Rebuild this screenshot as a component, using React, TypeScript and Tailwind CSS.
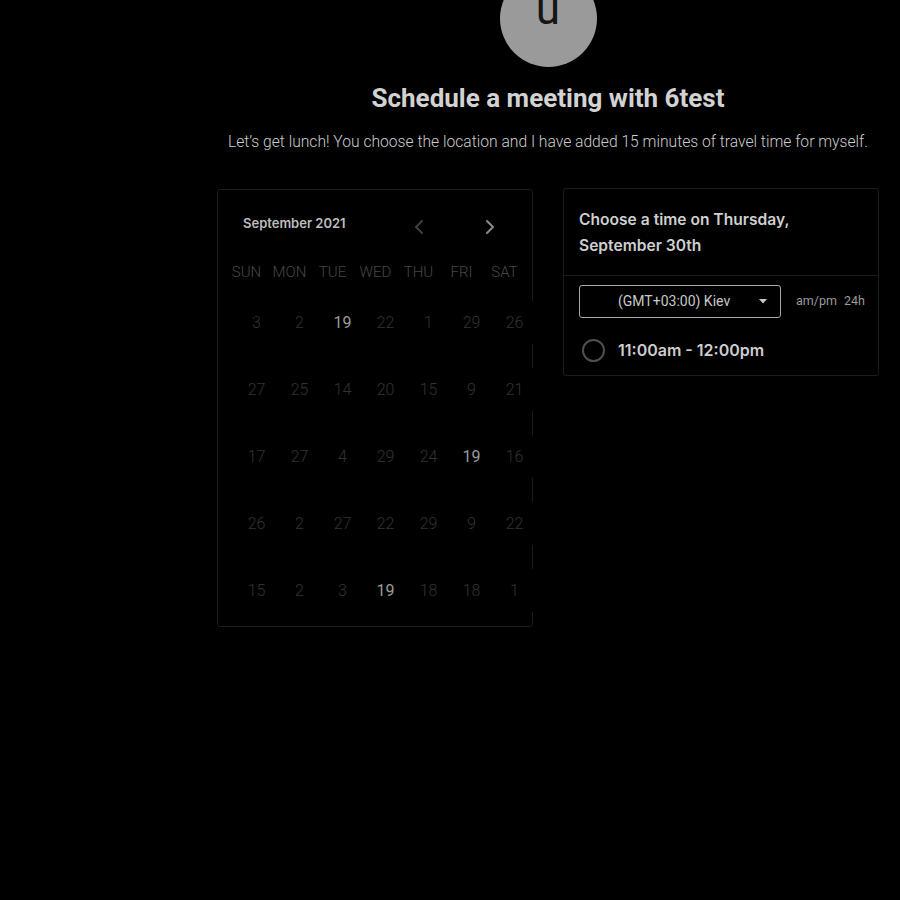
import React from "react"

const weekdays = ["SUN", "MON", "TUE", "WED", "THU", "FRI", "SAT"]

const weeks = [
  ["3", "2", "19", "22", "1", "29", "26"],
  ["27", "25", "14", "20", "15", "9", "21"],
  ["17", "27", "4", "29", "24", "19", "16"],
  ["26", "2", "27", "22", "29", "9", "22"],
  ["15", "2", "3", "19", "18", "18", "1"],
]

// which cells are available (brighter)
const active: Record<string, boolean> = { "0-2": true, "2-5": true, "4-3": true }

function Chevron({ dir, color }: { dir: "left" | "right"; color: string }) {
  return (
    <svg width="10" height="16" viewBox="0 0 10 16" fill="none">
      <path
        d={dir === "left" ? "M8 2L2 8l6 6" : "M2 2l6 6-6 6"}
        stroke={color}
        strokeWidth="2"
        strokeLinecap="round"
        strokeLinejoin="round"
      />
    </svg>
  )
}

function Calendar() {
  return (
    <div className="w-[316px] h-[438px] border border-[#1c1c1c] rounded-[3px] bg-black flex flex-col shrink-0">
      <div className="flex items-center h-[44px] mt-[12px] pl-[25px]">
        <span className="text-[13px] font-semibold text-[#bdbdbd] font-['Inter',sans-serif] w-[171px]">
          September 2021
        </span>
        <div className="flex items-center gap-[61px] mt-[6px]">
          <Chevron dir="left" color="#3f3f3f" />
          <Chevron dir="right" color="#8a8a8a" />
        </div>
      </div>
      <div className="grid grid-cols-[repeat(7,43px)] pl-[7px] mt-[13px] font-['Roboto',sans-serif] font-light text-[15px] text-[#474747]">
        {weekdays.map(d => (
          <div key={d} className="text-center h-[26px] leading-[26px]">{d}</div>
        ))}
      </div>
      <div className="grid grid-cols-[repeat(7,43px)] gap-y-[24px] pl-[17px] mt-[16px] font-['Roboto',sans-serif] font-light text-[16px]">
        {weeks.map((w, i) =>
          w.map((n, j) => (
            <div
              key={i + "-" + j}
              className={
                "h-[43px] bg-black flex items-center justify-center " +
                (active[i + "-" + j] ? "text-[#9c9c9c] font-normal" : "text-[#333333]")
              }
            >
              {n}
            </div>
          ))
        )}
      </div>
    </div>
  )
}

function TimePanel() {
  return (
    <div className="w-[316px] border border-[#1c1c1c] rounded-[3px] bg-black self-start mt-[-1px] shrink-0">
      <div className="px-[15px] pt-[18px] pb-[16px] border-b border-[#1c1c1c]">
        <h2 className="text-[15.6px] leading-[26px] font-semibold text-[#cfcfcf] font-['Inter',sans-serif]">
          Choose a time on Thursday,
          <br />
          September 30th
        </h2>
      </div>
      <div className="px-[15px] pt-[9px] pb-[12px]">
        <div className="flex items-center">
          <div className="w-[202px] h-[33px] shrink-0 border border-[#a9a9a9] rounded-[3px] flex items-center justify-between pl-[38px] pr-[13px]">
            <span className="text-[14px] text-[#c8c8c8] font-['Roboto',sans-serif]">(GMT+03:00) Kiev</span>
            <svg width="8" height="5" viewBox="0 0 8 5">
              <path d="M0 0h8L4 4.5z" fill="#c8c8c8" />
            </svg>
          </div>
          <div className="ml-[15px] flex gap-[7px] text-[12.5px] text-[#9a9a9a] font-['Roboto',sans-serif]">
            <span>am/pm</span>
            <span>24h</span>
          </div>
        </div>
        <div className="flex items-center mt-[19px] h-[26px]">
          <div className="w-[23px] h-[23px] rounded-full border-2 border-[#4f4f4f] ml-[3px]" />
          <span className="ml-[13px] text-[16px] font-semibold text-[#cdcdcd] font-['Inter',sans-serif]">
            11:00am - 12:00pm
          </span>
        </div>
      </div>
    </div>
  )
}

export default function App() {
  return (
    <div className="w-[900px] h-[900px] bg-black overflow-hidden">
      <div className="ml-[217px] w-[662px] flex flex-col items-center">
        <div className="w-[97px] h-[97px] rounded-full bg-[#9a9a9a] mt-[-30px] flex items-end justify-center">
          <span className="text-[44px] leading-none text-[#151515] font-['Roboto',sans-serif] mb-[36px]">u</span>
        </div>
        <h1 className="mt-[15px] text-[26px] leading-[32px] font-bold text-[#d2d2d2] font-['Roboto',sans-serif]">
          Schedule a meeting with 6test
        </h1>
        <p className="mt-[16px] text-[15.65px] leading-[24px] text-[#cccccc] font-light font-['Roboto',sans-serif] whitespace-nowrap">
          Let’s get lunch! You choose the location and I have added 15 minutes of travel time for myself.
        </p>
        <div className="mt-[35px] flex gap-[30px] w-full">
          <Calendar />
          <TimePanel />
        </div>
      </div>
    </div>
  )
}
